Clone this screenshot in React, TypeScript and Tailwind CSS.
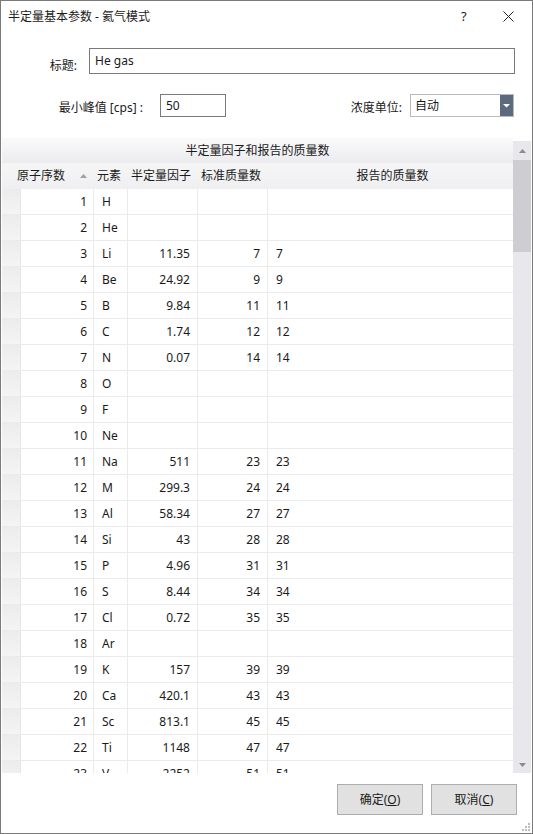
import React from "react";

type Row = [number, string, string, string, string];

const rows: Row[] = [
  [1, "H", "", "", ""],
  [2, "He", "", "", ""],
  [3, "Li", "11.35", "7", "7"],
  [4, "Be", "24.92", "9", "9"],
  [5, "B", "9.84", "11", "11"],
  [6, "C", "1.74", "12", "12"],
  [7, "N", "0.07", "14", "14"],
  [8, "O", "", "", ""],
  [9, "F", "", "", ""],
  [10, "Ne", "", "", ""],
  [11, "Na", "511", "23", "23"],
  [12, "M", "299.3", "24", "24"],
  [13, "Al", "58.34", "27", "27"],
  [14, "Si", "43", "28", "28"],
  [15, "P", "4.96", "31", "31"],
  [16, "S", "8.44", "34", "34"],
  [17, "Cl", "0.72", "35", "35"],
  [18, "Ar", "", "", ""],
  [19, "K", "157", "39", "39"],
  [20, "Ca", "420.1", "43", "43"],
  [21, "Sc", "813.1", "45", "45"],
  [22, "Ti", "1148", "47", "47"],
  [23, "V", "2252", "51", "51"],
];

const font = {
  fontFamily: '"Noto Sans", "Noto Sans CJK SC", sans-serif',
};

export default function App() {
  return (
    <div
      className="w-[533px] h-[834px] border border-[#7a7a7a] bg-white text-[12px] text-[#1a1a1a] flex flex-col overflow-hidden"
      style={font}
    >
      {/* Title bar */}
      <div className="h-[31px] flex items-center pl-[7px] shrink-0">
        <div className="flex-1 leading-none">半定量基本参数 - 氦气模式</div>
        <div className="w-[10px] text-[13px] leading-none mr-[32px]">?</div>
        <svg width="11" height="11" viewBox="0 0 11 11" className="mr-[18px]">
          <path d="M0.5 0.5 L10.5 10.5 M10.5 0.5 L0.5 10.5" stroke="#222" strokeWidth="1" />
        </svg>
      </div>

      {/* Row 1 */}
      <div className="flex items-start mt-[16px] shrink-0">
        <div className="w-[76px] text-right pt-[12px] leading-none">标题:</div>
        <div className="ml-[12px] w-[426px] h-[26px] border border-[#7a7a7a] flex items-center pl-[5px] leading-none">
          He gas
        </div>
      </div>

      {/* Row 2 */}
      <div className="flex items-start mt-[20px] shrink-0">
        <div className="w-[142px] text-right pt-[8px] leading-none">最小峰值 [cps] :</div>
        <div className="ml-[17px] w-[66px] h-[23px] border border-[#7a7a7a] flex items-center pl-[5px] leading-none">
          50
        </div>
        <div className="w-[176px] text-right pt-[8px] leading-none">浓度单位:</div>
        <div className="ml-[8px] w-[104px] h-[23px] border border-[#b9b9b9] flex">
          <div className="flex-1 flex items-center pl-[4px] leading-none">自动</div>
          <div className="w-[13px] bg-[#5b6a7f] flex items-center justify-center">
            <svg width="7" height="4" viewBox="0 0 7 4">
              <path d="M0 0 L7 0 L3.5 3.5 Z" fill="#ffffff" />
            </svg>
          </div>
        </div>
      </div>

      {/* Table */}
      <div className="flex mt-[21px] ml-[1px] mr-[1px] h-[635px] shrink-0">
        <div className="w-[511px] flex flex-col overflow-hidden">
          <div className="h-[25px] shrink-0 flex items-center justify-center bg-gradient-to-b from-[#fafafb] to-[#ececf0] leading-none">
            半定量因子和报告的质量数
          </div>
          <div className="h-[26px] shrink-0 flex items-center bg-gradient-to-b from-[#f6f6f7] to-[#efeff1] leading-none">
            <div className="w-[91px] flex items-center pl-[15px] pr-[4px]">
              <span className="flex-1">原子序数</span>
              <svg width="7" height="4" viewBox="0 0 7 4" className="mr-[2px]">
                <path d="M0 4 L7 4 L3.5 0 Z" fill="#a0a0a0" />
              </svg>
            </div>
            <div className="w-[35px] pl-[4px]">元素</div>
            <div className="w-[70px] pl-[3px]">半定量因子</div>
            <div className="w-[70px] pl-[3px]">标准质量数</div>
            <div className="flex-1 text-center pl-[4px]">报告的质量数</div>
          </div>
          {rows.map((r) => (
            <div key={r[0]} className="h-[26px] shrink-0 flex border-b border-[#ebebeb] leading-none">
              <div className="w-[19px] bg-gradient-to-b from-[#ececec] to-[#f4f4f4] border-r border-[#e6e6e6]" />
              <div className="w-[73px] border-r border-[#ebebeb] flex items-center justify-end pr-[6px]">
                {r[0]}
              </div>
              <div className="w-[34px] border-r border-[#ebebeb] flex items-center pl-[8px]">{r[1]}</div>
              <div className="w-[70px] border-r border-[#ebebeb] flex items-center justify-end pr-[7px]">
                {r[2]}
              </div>
              <div className="w-[70px] border-r border-[#ebebeb] flex items-center justify-end pr-[7px]">
                {r[3]}
              </div>
              <div className="flex-1 flex items-center pl-[8px]">{r[4]}</div>
            </div>
          ))}
        </div>
        {/* Scrollbar */}
        <div className="w-[18px] flex flex-col bg-[#e8e8ec] mt-[3px]">
          <div className="h-[19px] flex items-center justify-center">
            <svg width="7" height="4" viewBox="0 0 7 4">
              <path d="M0 4 L7 4 L3.5 0 Z" fill="#8a8a8f" />
            </svg>
          </div>
          <div className="h-[92px] bg-[#cdcdd2]" />
          <div className="flex-1" />
          <div className="h-[17px] flex items-center justify-center">
            <svg width="7" height="4" viewBox="0 0 7 4">
              <path d="M0 0 L7 0 L3.5 4 Z" fill="#8a8a8f" />
            </svg>
          </div>
        </div>
      </div>

      {/* Buttons */}
      <div className="flex justify-end mt-[11px] pr-[15px] gap-[8px] shrink-0">
        <button className="w-[86px] h-[31px] bg-[#e1e1e1] border border-[#adadad] leading-none">
          确定(<span className="underline">O</span>)
        </button>
        <button className="w-[86px] h-[31px] bg-[#e1e1e1] border border-[#adadad] leading-none">
          取消(<span className="underline">C</span>)
        </button>
      </div>

      {/* Resize grip */}
      <div className="flex-1 flex items-end justify-end pr-[2px] pb-[2px]">
        <svg width="9" height="9" viewBox="0 0 9 9">
          <rect x="7" y="1" width="2" height="2" fill="#bdbdbd" />
          <rect x="4" y="4" width="2" height="2" fill="#bdbdbd" />
          <rect x="7" y="4" width="2" height="2" fill="#bdbdbd" />
          <rect x="1" y="7" width="2" height="2" fill="#bdbdbd" />
          <rect x="4" y="7" width="2" height="2" fill="#bdbdbd" />
          <rect x="7" y="7" width="2" height="2" fill="#bdbdbd" />
        </svg>
      </div>
    </div>
  );
}
